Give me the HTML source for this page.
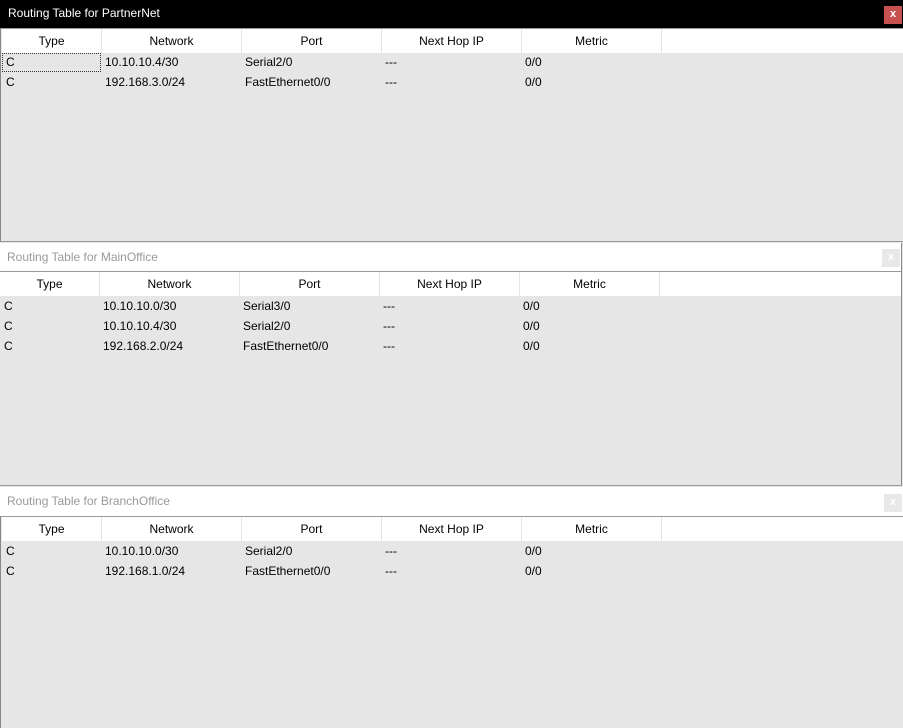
<!DOCTYPE html>
<html><head><meta charset="utf-8"><style>
*{margin:0;padding:0;box-sizing:border-box}
body{width:903px;height:728px;overflow:hidden;background:#e6e6e6;font-family:"Liberation Sans",sans-serif;font-size:12px;color:#000;position:relative}
.a{position:absolute}
.hdr{position:absolute;background:#fff;height:24px}
.hdr div{position:absolute;top:0;height:24px;line-height:24px;text-align:center;border-right:1px solid #e5e5e5;width:140px}
.row{position:absolute;height:20px;line-height:20px;white-space:nowrap}
.row span{position:absolute;top:0}
.title{position:absolute;left:0;width:903px;height:28px;line-height:26px;padding-left:8px}
.x{position:absolute;width:18px;height:18px;text-align:center;line-height:17px;font-size:11px;font-weight:bold}
</style></head><body>
<!-- Window 1 -->
<div class="a" style="left:0;top:0;width:903px;height:242px;background:#e6e6e6;border-left:1px solid #888;border-bottom:1px solid #999"></div>
<div class="title" style="top:0;background:#000;color:#fff">Routing Table for PartnerNet</div>
<div class="x" style="left:884px;top:6px;background:#c75050;color:#fff">x</div>
<div class="a" style="left:0;top:28px;width:903px;height:1px;background:#999"></div>
<div class="hdr" style="left:2px;top:29px;width:901px">
<div style="left:0;width:100px">Type</div><div style="left:100px">Network</div><div style="left:240px">Port</div><div style="left:380px">Next Hop IP</div><div style="left:520px">Metric</div>
</div>
<div class="a" style="left:2px;top:53px;width:99px;height:19px;border:1px dotted #333"></div>
<div class="row" style="top:52px;left:0"><span style="left:6px">C</span><span style="left:105px">10.10.10.4/30</span><span style="left:245px">Serial2/0</span><span style="left:385px">---</span><span style="left:525px">0/0</span></div>
<div class="row" style="top:72px;left:0"><span style="left:6px">C</span><span style="left:105px">192.168.3.0/24</span><span style="left:245px">FastEthernet0/0</span><span style="left:385px">---</span><span style="left:525px">0/0</span></div>

<!-- Window 2 -->
<div class="a" style="left:0;top:243px;width:902px;height:243px;background:#e6e6e6;border-right:1px solid #888;border-bottom:1px solid #999"></div>
<div class="title" style="top:243px;width:901px;height:28px;background:#fff;color:#999;padding-left:7px;line-height:28px">Routing Table for MainOffice</div>
<div class="x" style="left:882px;top:249px;background:#e8e8e8;color:#fff">x</div>
<div class="a" style="left:0;top:271px;width:901px;height:1px;background:#999"></div>
<div class="hdr" style="left:0;top:272px;width:901px">
<div style="left:0;width:100px">Type</div><div style="left:100px">Network</div><div style="left:240px">Port</div><div style="left:380px">Next Hop IP</div><div style="left:520px">Metric</div>
</div>
<div class="row" style="top:296px"><span style="left:4px">C</span><span style="left:103px">10.10.10.0/30</span><span style="left:243px">Serial3/0</span><span style="left:383px">---</span><span style="left:523px">0/0</span></div>
<div class="row" style="top:316px"><span style="left:4px">C</span><span style="left:103px">10.10.10.4/30</span><span style="left:243px">Serial2/0</span><span style="left:383px">---</span><span style="left:523px">0/0</span></div>
<div class="row" style="top:336px"><span style="left:4px">C</span><span style="left:103px">192.168.2.0/24</span><span style="left:243px">FastEthernet0/0</span><span style="left:383px">---</span><span style="left:523px">0/0</span></div>

<!-- Window 3 -->
<div class="a" style="left:0;top:487px;width:903px;height:241px;background:#e6e6e6;border-left:1px solid #888"></div>
<div class="title" style="top:487px;height:29px;background:#fff;color:#999;padding-left:7px;line-height:29px">Routing Table for BranchOffice</div>
<div class="x" style="left:884px;top:494px;background:#e8e8e8;color:#fff">x</div>
<div class="a" style="left:0;top:516px;width:903px;height:1px;background:#999"></div>
<div class="hdr" style="left:2px;top:517px;width:901px">
<div style="left:0;width:100px">Type</div><div style="left:100px">Network</div><div style="left:240px">Port</div><div style="left:380px">Next Hop IP</div><div style="left:520px">Metric</div>
</div>
<div class="row" style="top:541px"><span style="left:6px">C</span><span style="left:105px">10.10.10.0/30</span><span style="left:245px">Serial2/0</span><span style="left:385px">---</span><span style="left:525px">0/0</span></div>
<div class="row" style="top:561px"><span style="left:6px">C</span><span style="left:105px">192.168.1.0/24</span><span style="left:245px">FastEthernet0/0</span><span style="left:385px">---</span><span style="left:525px">0/0</span></div>
</body></html>
